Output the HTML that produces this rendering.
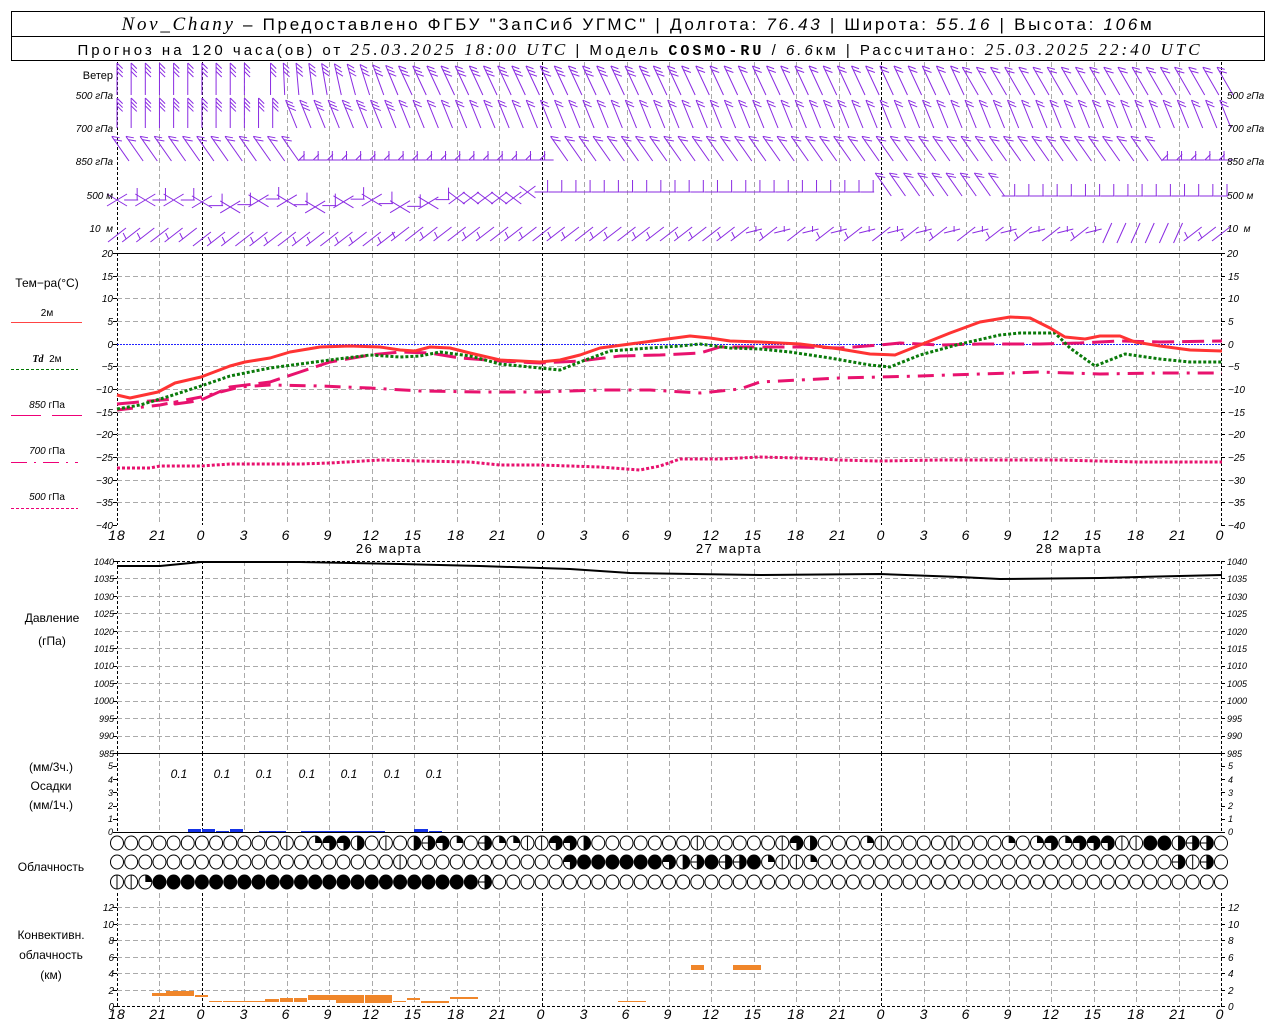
<!DOCTYPE html>
<html><head><meta charset="utf-8">
<style>
html,body{margin:0;padding:0;background:#fff;}
body{width:1280px;height:1024px;position:relative;overflow:hidden;font-family:"Liberation Sans",sans-serif;}
svg{position:absolute;left:0;top:0;}
text{font-family:"Liberation Sans",sans-serif;}
.ax{font-size:10px;font-style:italic;fill:#000;}
.lb{font-size:12px;fill:#000;}
.tm{font-size:14px;font-style:italic;fill:#000;letter-spacing:1px;}
</style></head><body>
<svg id="s" width="1280" height="1024" viewBox="0 0 1280 1024">
<g id="g"></g>
<!-- header -->
<rect x="11.5" y="11.5" width="1253" height="49" fill="none" stroke="#000"/>
<line x1="11" y1="36.5" x2="1265" y2="36.5" stroke="#000"/>
<text x="638" y="30" text-anchor="middle" style="font-size:17px;letter-spacing:2.7px"><tspan style="font-family:'Liberation Serif',serif;font-style:italic;font-size:19px">Nov_Chany</tspan> – Предоставлено ФГБУ "ЗапСиб УГМС" | Долгота: <tspan style="font-style:italic">76.43</tspan> | Широта: <tspan style="font-style:italic">55.16</tspan> | Высота: <tspan style="font-style:italic">106</tspan>м</text>
<text x="640" y="55" text-anchor="middle" style="font-size:15px;letter-spacing:3px">Прогноз на 120 часа(ов) от <tspan style="font-style:italic;font-family:'Liberation Serif',serif;font-size:17px">25.03.2025 18:00 UTC</tspan> | Модель <tspan style="font-family:'Liberation Mono',monospace;font-weight:bold">COSMO-RU</tspan> / <tspan style="font-style:italic">6.6</tspan>км | Рассчитано: <tspan style="font-style:italic;font-family:'Liberation Serif',serif;font-size:17px">25.03.2025 22:40 UTC</tspan></text>

<!-- wind labels -->
<g class="ax" text-anchor="end">
<text x="113" y="79" class="lb" style="font-style:normal;font-size:11px">Ветер</text>
<text x="113" y="99">500 гПа</text><text x="113" y="132">700 гПа</text><text x="113" y="165">850 гПа</text>
<text x="113" y="199">500 м</text><text x="113" y="232">10 &#160;м</text><text x="113" y="257">20</text>
</g>
<g class="ax">
<text x="1227" y="99">500 гПа</text><text x="1227" y="132">700 гПа</text><text x="1227" y="165">850 гПа</text>
<text x="1227" y="199">500 м</text><text x="1227" y="232">10 &#160;м</text><text x="1227" y="257">20</text>
</g>
<!-- temp labels -->
<g class="ax" text-anchor="end">
<text x="113" y="280">15</text><text x="113" y="302">10</text><text x="113" y="325">5</text><text x="113" y="348">0</text>
<text x="113" y="370">−5</text><text x="113" y="393">−10</text><text x="113" y="416">−15</text><text x="113" y="438">−20</text>
<text x="113" y="461">−25</text><text x="113" y="484">−30</text><text x="113" y="506">−35</text><text x="113" y="529">−40</text>
</g>
<g class="ax">
<text x="1228" y="280">15</text><text x="1228" y="302">10</text><text x="1228" y="325">5</text><text x="1228" y="348">0</text>
<text x="1228" y="370">−5</text><text x="1228" y="393">−10</text><text x="1228" y="416">−15</text><text x="1228" y="438">−20</text>
<text x="1228" y="461">−25</text><text x="1228" y="484">−30</text><text x="1228" y="506">−35</text><text x="1228" y="529">−40</text>
</g>
<text x="47" y="287" class="lb" text-anchor="middle">Тем−ра(°C)</text>
<text x="47" y="316" class="ax" text-anchor="middle" style="font-style:normal">2м</text>
<line x1="11" y1="322.5" x2="82" y2="322.5" stroke="#f44" stroke-width="1"/>
<text x="47" y="362" class="ax" text-anchor="middle"><tspan style="font-weight:bold;font-family:'Liberation Serif',serif">Td</tspan> &#160;<tspan style="font-style:normal">2м</tspan></text>
<line x1="11" y1="369.5" x2="78" y2="369.5" stroke="#070" stroke-dasharray="3,2"/>
<text x="47" y="408" class="ax" text-anchor="middle">850 <tspan style="font-style:normal">гПа</tspan></text>
<line x1="11" y1="415.5" x2="41" y2="415.5" stroke="#e07"/><line x1="52" y1="415.5" x2="82" y2="415.5" stroke="#e07"/>
<text x="47" y="454" class="ax" text-anchor="middle">700 <tspan style="font-style:normal">гПа</tspan></text>
<line x1="11" y1="462.5" x2="78" y2="462.5" stroke="#e07" stroke-dasharray="16,7,2,7"/>
<text x="47" y="500" class="ax" text-anchor="middle">500 <tspan style="font-style:normal">гПа</tspan></text>
<line x1="11" y1="508.5" x2="78" y2="508.5" stroke="#e07" stroke-dasharray="3,2"/>
<!-- time labels -->
<g class="tm" text-anchor="middle">
<text x="117" y="540">18</text><text x="158" y="540">21</text><text x="201" y="540">0</text><text x="244" y="540">3</text><text x="286" y="540">6</text><text x="328" y="540">9</text><text x="371" y="540">12</text><text x="413" y="540">15</text><text x="456" y="540">18</text><text x="498" y="540">21</text><text x="541" y="540">0</text><text x="584" y="540">3</text><text x="626" y="540">6</text><text x="668" y="540">9</text><text x="711" y="540">12</text><text x="753" y="540">15</text><text x="796" y="540">18</text><text x="838" y="540">21</text><text x="881" y="540">0</text><text x="924" y="540">3</text><text x="966" y="540">6</text><text x="1008" y="540">9</text><text x="1051" y="540">12</text><text x="1093" y="540">15</text><text x="1136" y="540">18</text><text x="1178" y="540">21</text><text x="1220" y="540">0</text>
</g>
<g class="lb" text-anchor="middle" style="letter-spacing:1.5px;font-size:13px">
<text x="389" y="553">26 марта</text><text x="729" y="553">27 марта</text><text x="1069" y="553">28 марта</text>
</g>
<!-- pressure labels -->
<text x="52" y="622" class="lb" text-anchor="middle">Давление</text>
<text x="52" y="645" class="lb" text-anchor="middle">(гПа)</text>
<g class="ax" text-anchor="end" style="font-size:9px">
<text x="114" y="565">1040</text><text x="114" y="582">1035</text><text x="114" y="600">1030</text><text x="114" y="617">1025</text><text x="114" y="635">1020</text><text x="114" y="652">1015</text><text x="114" y="669">1010</text><text x="114" y="687">1005</text><text x="114" y="704">1000</text><text x="114" y="722">995</text><text x="114" y="739">990</text><text x="114" y="757">985</text>
</g>
<g class="ax" style="font-size:9px">
<text x="1227" y="565">1040</text><text x="1227" y="582">1035</text><text x="1227" y="600">1030</text><text x="1227" y="617">1025</text><text x="1227" y="635">1020</text><text x="1227" y="652">1015</text><text x="1227" y="669">1010</text><text x="1227" y="687">1005</text><text x="1227" y="704">1000</text><text x="1227" y="722">995</text><text x="1227" y="739">990</text><text x="1227" y="757">985</text>
</g>
<!-- precip -->
<text x="51" y="771" class="lb" text-anchor="middle">(мм/3ч.)</text>
<text x="51" y="790" class="lb" text-anchor="middle">Осадки</text>
<text x="51" y="809" class="lb" text-anchor="middle">(мм/1ч.)</text>
<g class="ax" text-anchor="end" style="font-size:9px">
<text x="113" y="769">5</text><text x="113" y="783">4</text><text x="113" y="796">3</text><text x="113" y="809">2</text><text x="113" y="822">1</text><text x="113" y="835">0</text>
</g>
<g class="ax" style="font-size:9px">
<text x="1228" y="769">5</text><text x="1228" y="783">4</text><text x="1228" y="796">3</text><text x="1228" y="809">2</text><text x="1228" y="822">1</text><text x="1228" y="835">0</text>
</g>
<g class="ax" text-anchor="middle" style="font-size:12px">
<text x="179" y="778">0.1</text><text x="222" y="778">0.1</text><text x="264" y="778">0.1</text><text x="307" y="778">0.1</text><text x="349" y="778">0.1</text><text x="392" y="778">0.1</text><text x="434" y="778">0.1</text>
</g>
<text x="51" y="871" class="lb" text-anchor="middle">Облачность</text>
<!-- convective -->
<text x="51" y="939" class="lb" text-anchor="middle">Конвективн.</text>
<text x="51" y="959" class="lb" text-anchor="middle">облачность</text>
<text x="51" y="979" class="lb" text-anchor="middle">(км)</text>
<g class="ax" text-anchor="end">
<text x="114" y="911">12</text><text x="114" y="928">10</text><text x="114" y="944">8</text><text x="114" y="961">6</text><text x="114" y="977">4</text><text x="114" y="994">2</text><text x="114" y="1010">0</text>
</g>
<g class="ax">
<text x="1228" y="911">12</text><text x="1228" y="928">10</text><text x="1228" y="944">8</text><text x="1228" y="961">6</text><text x="1228" y="977">4</text><text x="1228" y="994">2</text><text x="1228" y="1010">0</text>
</g>
<g class="tm" text-anchor="middle">
<text x="117" y="1019">18</text><text x="158" y="1019">21</text><text x="201" y="1019">0</text><text x="244" y="1019">3</text><text x="286" y="1019">6</text><text x="328" y="1019">9</text><text x="371" y="1019">12</text><text x="413" y="1019">15</text><text x="456" y="1019">18</text><text x="498" y="1019">21</text><text x="541" y="1019">0</text><text x="584" y="1019">3</text><text x="626" y="1019">6</text><text x="668" y="1019">9</text><text x="711" y="1019">12</text><text x="753" y="1019">15</text><text x="796" y="1019">18</text><text x="838" y="1019">21</text><text x="881" y="1019">0</text><text x="924" y="1019">3</text><text x="966" y="1019">6</text><text x="1008" y="1019">9</text><text x="1051" y="1019">12</text><text x="1093" y="1019">15</text><text x="1136" y="1019">18</text><text x="1178" y="1019">21</text><text x="1220" y="1019">0</text>
</g>
</svg>
<script>
(function(){
var NS="http://www.w3.org/2000/svg",g=document.getElementById('g');
function el(t,a){var e=document.createElementNS(NS,t);for(var k in a)e.setAttribute(k,a[k]);g.appendChild(e);return e;}
var X0=117,X1=1221,DX=(X1-X0)/78;
function hx(h){return X0+h*DX;}
var panels=[[62,252],[253,525],[561,753],[753,832],[893,1006]];
for(var h=0;h<=78;h+=3){var x=Math.round(hx(h))+0.5;var day=((h-6)%24===0)||h===0||h===78;
 panels.forEach(function(p){el('line',{x1:x,y1:p[0],x2:x,y2:p[1],stroke:day?'#000':'#aaa','stroke-dasharray':day?'3,2':'5,3','stroke-width':1});});}
function hl(y,c,d){el('line',{x1:X0,y1:y+0.5,x2:X1,y2:y+0.5,stroke:c,'stroke-dasharray':d});}
for(var v=15;v>=-35;v-=5){if(v===0)continue;hl(Math.round(253+(20-v)*4.533),'#aaa','5,3');}
for(var p=1035;p>=990;p-=5){hl(Math.round(561+(1040-p)*3.49),'#aaa','5,3');}
for(var k=2;k<=12;k+=2){hl(Math.round(1006-k*8.25),'#aaa','5,3');}
el('line',{x1:X0,y1:344.5,x2:X1,y2:344.5,stroke:'#22f','stroke-dasharray':'2,1'});
el('line',{x1:X0,y1:253.5,x2:X1,y2:253.5,stroke:'#000'});
el('line',{x1:X0,y1:561.5,x2:X1,y2:561.5,stroke:'#000','stroke-dasharray':'3,2'});
el('line',{x1:X0,y1:753.5,x2:X1,y2:753.5,stroke:'#000'});
el('line',{x1:X0,y1:832.5,x2:X1,y2:832.5,stroke:'#000'});
el('line',{x1:X0,y1:1006.5,x2:X1,y2:1006.5,stroke:'#000','stroke-dasharray':'3,2'});
function ticks(ys){ys.forEach(function(y){el('line',{x1:X0-4,y1:y+0.5,x2:X0,y2:y+0.5,stroke:'#000'});el('line',{x1:X1,y1:y+0.5,x2:X1+4,y2:y+0.5,stroke:'#000'});});}
var ty=[];for(var v=20;v>=-40;v-=5)ty.push(Math.round(253+(20-v)*4.533));ticks(ty);
ty=[];for(var p=1040;p>=985;p-=5)ty.push(Math.round(561+(1040-p)*3.49));ticks(ty);
ty=[];for(var k=0;k<=5;k++)ty.push(Math.round(832-k*13.2));ticks(ty);
ty=[];for(var k=0;k<=12;k+=2)ty.push(Math.round(1006-k*8.25));ticks(ty);
function pl(pts,c,w,d){el('polyline',{points:pts.map(function(p){return p.join(',')}).join(' '),fill:'none',stroke:c,'stroke-width':w,'stroke-dasharray':d||'none','stroke-linejoin':'round'});}
pl([[117,404],[150,401],[175,399],[175,404],[190,402],[201,400],[230,387],[270,382],[300,372],[330,362],[370,355],[400,352],[430,353],[460,358],[500,361],[540,363],[580,361],[620,356],[660,355],[700,353],[720,347],[760,347],[800,347],[840,348],[880,345],[900,343],[940,345],[980,344],[1040,344],[1080,343],[1120,341],[1160,342],[1222,341]],'#e8126e',3,'22,8');
pl([[117,410],[160,405],[201,397],[240,387],[270,385],[320,386],[370,388],[420,391],[480,392],[540,392],[600,390],[650,390],[700,393],[740,389],[760,382],[800,380],[840,378],[880,377],[920,376],[980,374],[1040,372],[1100,374],[1160,373],[1222,373]],'#e8126e',3,'16,8,3,8');
pl([[117,468],[150,468],[160,466],[201,466],[230,464],[300,464],[330,463],[380,460],[420,461],[470,462],[500,465],[540,465],[600,467],[640,470],[660,466],[680,459],[720,459],[760,457],[800,458],[840,460],[880,461],[940,460],[1000,460],[1060,460],[1100,461],[1140,462],[1180,462],[1222,462]],'#e8126e',3,'3,2');
pl([[117,409],[140,405],[170,396],[201,386],[230,376],[270,368],[300,364],[330,360],[370,355],[400,357],[420,356],[440,352],[470,356],[500,364],[540,368],[560,370],[580,362],[610,351],[650,348],[680,346],[700,344],[730,348],[760,349],[790,352],[830,358],[870,365],[890,367],[920,355],[960,344],[1000,335],[1020,333],[1055,333],[1070,348],[1095,366],[1110,360],[1125,354],[1160,359],[1190,362],[1222,362]],'#0a7a0a',3,'3,2');
pl([[117,395],[130,398],[158,392],[175,383],[201,377],[230,366],[245,362],[270,358],[290,352],[320,347],[350,346],[380,347],[400,350],[415,351],[430,347],[450,348],[470,353],[500,360],[540,362],[560,360],[580,355],[600,348],[630,344],[660,340],[690,336],[710,338],[730,341],[760,342],[800,344],[840,349],[870,354],[895,355],[920,345],[950,333],[980,322],[1010,317],[1030,318],[1050,328],[1065,337],[1085,339],[1100,336],[1120,336],[1135,342],[1160,346],[1190,350],[1222,351]],'#f33',3);
pl([[117,566],[160,566],[201,562],[300,562],[400,564],[480,566],[570,569],[630,573],[760,575],[880,574],[960,577],[1000,579],[1100,578],[1180,576],[1222,575]],'#000',2);
[[188,201,829],[202,215,829],[216,229,831],[230,243,829],[259,286,831],[301,385,831],[414,428,829],[429,442,831]].forEach(function(b){el('rect',{x:b[0],y:b[2],width:b[1]-b[0],height:832-b[2],fill:'#1533e6'});});
[[152,166,993,996],[166,194,991,996],[195,208,995,997],[209,222,1001,1002],[223,265,1001,1002],[265,279,999,1002],[280,293,998,1002],[294,307,998,1002],[308,336,995,1000],[336,364,995,1003],[365,392,995,1003],[393,406,1001,1002],[407,420,998,1000],[421,449,1001,1003],[450,478,997,999],[618,646,1001,1002],[691,704,965,970],[733,761,965,970]].forEach(function(b){el('rect',{x:b[0],y:b[2],width:b[1]-b[0],height:b[3]-b[2],fill:'#f0862a'});});
var rows=[
 "000000000000102443010354205221144300000001000001430002100001000202424441166355",
 "000000000000000000001000000000004666666435655621120000000000000000000000000515",
 "112666666666666666666666665000000000000000000000000000000000000000000000000000"];
var ry=[843,862,882];
rows.forEach(function(r,j){for(var i=0;i<=78;i++){var c=+r.charAt(i)||0,cx=hx(i),cy=ry[j],R=6.5;
 el('ellipse',{cx:cx,cy:cy,rx:R,ry:7,fill:c===6?'#000':'#fff',stroke:'#000','stroke-width':1});
 if(c===1||c===3||c===5)el('line',{x1:cx,y1:cy-7,x2:cx,y2:cy+7,stroke:'#000'});
 if(c===2)el('path',{d:'M'+cx+','+cy+' L'+cx+','+(cy-7)+' A'+R+',7 0 0 1 '+(cx+R)+','+cy+' Z',fill:'#000'});
 if(c===3||c===5)el('path',{d:'M'+cx+','+(cy-7)+' A'+R+',7 0 0 1 '+cx+','+(cy+7)+' Z',fill:'#000'});
 if(c===4)el('path',{d:'M'+cx+','+cy+' L'+(cx-R)+','+cy+' A'+R+',7 0 1 1 '+cx+','+(cy+7)+' Z',fill:'#000'});
 if(c===5)el('line',{x1:cx-R,y1:cy,x2:cx,y2:cy,stroke:'#000'});
}});
var P='#8a2be2';
function ln(a,b,c,d){el('line',{x1:a,y1:b,x2:c,y2:d,stroke:P,'stroke-width':1});}
function barb(x,y,ang,len,n,side){
 var r=ang*Math.PI/180,ex=x+Math.cos(r)*len,ey=y+Math.sin(r)*len;ln(x,y,ex,ey);
 var fr=r+side*Math.PI*0.75;
 for(var k=0;k<n;k++){var t=1-k*0.13,bx=x+Math.cos(r)*len*t,by=y+Math.sin(r)*len*t;ln(bx,by,bx+Math.cos(fr)*8,by+Math.sin(fr)*8);}
}
for(var i=0;i<=78;i++){var x=hx(i);
 var a1=i<10?-90:(i<50?-90-25*Math.min(1,(i-10)/10):-115);
 if(i>=60)a1=-120;
 barb(x+(i<10?0:12),95,a1,32,i<14?3:(i<40?3:2),1);
 var a2=i<12?-90:-112;barb(x+(i<12?0:10),128,a2,30,i<20?3:2,1);
 if(i>=13&&i<=30||i>=74){barb(x+12,160,180,14,1,1);ln(x+3,160,x+3,151);}
 else barb(x+12,161,-125,30,2,1);
 var y4=i<6?200:(i<24?203+Math.sin(i)*4:(i<29?198:(i<54?192:(i<63?190:196))));
 if(i<24&&i%2===0){ln(x-10,y4-6,x+10,y4+6);ln(x-10,y4+6,x+10,y4-6);}
 else if(i>=24&&i<30){ln(x-8,y4+6,x+8,y4-6);ln(x-8,y4-6,x+8,y4+6);}
 else if(i>=54&&i<63){barb(x+10,y4+6,-125,28,2,1);}
 else {ln(x-7,y4,x+7,y4);ln(x+6,y4,x+6,y4-12);}
 var y5=i<6?236:(i<20?240:235);
 if(i>=44&&i<70&&i%2===1){ln(x-8,y5-2,x+8,y5-6);ln(x+2,y5-3,x+2,y5-9);}
 else if(i>=70&&i<76)ln(x-5,y5+8,x+4,y5-12);
 else {ln(x-9,y5+6,x+9,y5-8);if(i%3!==0)ln(x-5,y5+3,x-8,y5-3);}
}
})();
</script>
</body></html>
